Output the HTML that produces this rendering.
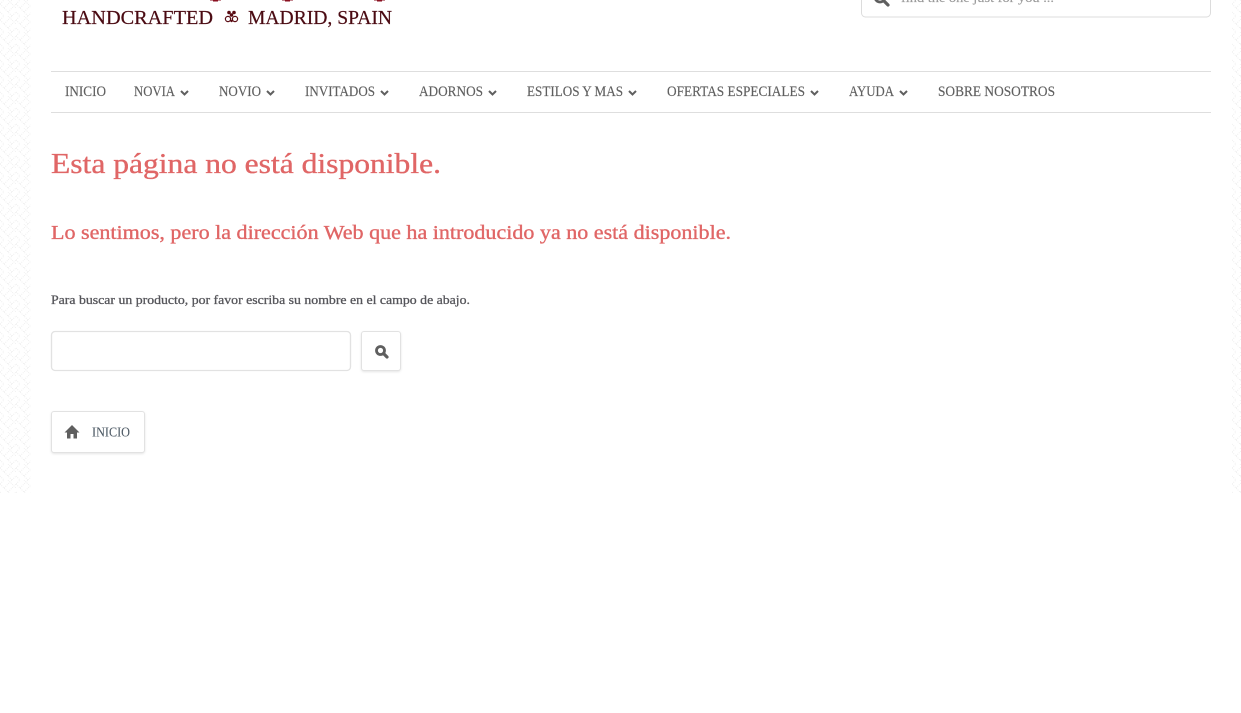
<!DOCTYPE html>
<html lang="es">
<head>
<meta charset="utf-8">
<title>Esta página no está disponible</title>
<style>
html,body{margin:0;padding:0;background:#fff;width:1241px;height:713px;overflow:hidden}
svg{position:absolute;left:0;top:0;display:block}
text{font-family:"Liberation Serif",serif}
.nav{font-size:14.5px;fill:#5f5f5f;stroke:#5f5f5f;stroke-width:.15px}
.h{fill:#e06666;stroke:#e06666;stroke-width:.35px}
</style>
</head>
<body>
<svg width="1241" height="713" viewBox="0 0 1241 713" xmlns="http://www.w3.org/2000/svg">
<defs>
<pattern id="weave" width="16" height="16" patternUnits="userSpaceOnUse">
<g stroke="#efefef" stroke-width="1" fill="none" stroke-dasharray="1 1">
<path d="M0 4L4 0M4 8L12 0M8 12L16 4M12 16L16 12M0 12L4 16M0 4L12 16M8 0L16 8"/>
</g>
</pattern>
</defs>
<rect x="0" y="0" width="31" height="493" fill="url(#weave)"/>
<rect x="1232" y="0" width="9" height="493" fill="url(#weave)"/>

<!-- logo remnants -->
<g fill="#8a1020">
<rect x="210" y="-2" width="11" height="2.5"/><rect x="213" y="0" width="5" height="1.5"/>
<rect x="282" y="-2" width="11" height="2.5"/><rect x="285" y="0" width="5" height="1.5"/>
<rect x="374" y="-2" width="11" height="2.5"/><rect x="377" y="0" width="5" height="1.5"/>
</g>
<text x="62" y="24" font-size="20" fill="#4a0a12" stroke="#4a0a12" stroke-width=".2" textLength="151" lengthAdjust="spacingAndGlyphs">HANDCRAFTED</text>
<g fill="#5a0c14">
<circle cx="229" cy="12.5" r="1.8"/><circle cx="234" cy="12.5" r="1.8"/><circle cx="231.5" cy="15" r="1.8"/>
<circle cx="228" cy="19" r="2.6" fill="none" stroke="#5a0c14" stroke-width="1.2"/><circle cx="235" cy="19" r="2.6" fill="none" stroke="#5a0c14" stroke-width="1.2"/>
<circle cx="231.5" cy="21" r="1.2"/>
</g>
<text x="248" y="24" font-size="20" fill="#4a0a12" stroke="#4a0a12" stroke-width=".2" textLength="144" lengthAdjust="spacingAndGlyphs">MADRID, SPAIN</text>

<!-- top search -->
<path d="M861.5 0V13a4 4 0 0 0 4 4H1206.5a4 4 0 0 0 4-4V0" fill="#fff" stroke="#dcdcdc"/>
<g>
<circle cx="880" cy="-3" r="5" fill="none" stroke="#5f5f5f" stroke-width="2.8"/>
<path d="M884 1L888 5" stroke="#5f5f5f" stroke-width="3.2" stroke-linecap="round"/>
</g>
<text x="901" y="2" font-size="13" fill="#9a9a9a" stroke="#9a9a9a" stroke-width=".15" textLength="153" lengthAdjust="spacingAndGlyphs">find the one just for you ...</text>

<!-- nav -->
<rect x="51" y="71" width="1160" height="1" fill="#dedede"/>
<rect x="51" y="112" width="1160" height="1" fill="#dedede"/>
<text class="nav" x="65" y="96" textLength="41" lengthAdjust="spacingAndGlyphs">INICIO</text>
<text class="nav" x="134" y="96" textLength="41" lengthAdjust="spacingAndGlyphs">NOVIA</text>
<text class="nav" x="219" y="96" textLength="42" lengthAdjust="spacingAndGlyphs">NOVIO</text>
<text class="nav" x="305" y="96" textLength="70" lengthAdjust="spacingAndGlyphs">INVITADOS</text>
<text class="nav" x="419" y="96" textLength="64" lengthAdjust="spacingAndGlyphs">ADORNOS</text>
<text class="nav" x="527" y="96" textLength="96" lengthAdjust="spacingAndGlyphs">ESTILOS Y MAS</text>
<text class="nav" x="667" y="96" textLength="138" lengthAdjust="spacingAndGlyphs">OFERTAS ESPECIALES</text>
<text class="nav" x="849" y="96" textLength="45" lengthAdjust="spacingAndGlyphs">AYUDA</text>
<text class="nav" x="938" y="96" textLength="117" lengthAdjust="spacingAndGlyphs">SOBRE NOSOTROS</text>
<g fill="none" stroke="#5f5f5f" stroke-width="2">
<path d="M181 91l3.5 3.5l3.5-3.5"/>
<path d="M267 91l3.5 3.5l3.5-3.5"/>
<path d="M381 91l3.5 3.5l3.5-3.5"/>
<path d="M489 91l3.5 3.5l3.5-3.5"/>
<path d="M629 91l3.5 3.5l3.5-3.5"/>
<path d="M811 91l3.5 3.5l3.5-3.5"/>
<path d="M900 91l3.5 3.5l3.5-3.5"/>
</g>

<!-- headings -->
<text class="h" x="51" y="173" font-size="29" textLength="390" lengthAdjust="spacingAndGlyphs">Esta página no está disponible.</text>
<text class="h" x="51" y="239" font-size="20" textLength="680" lengthAdjust="spacingAndGlyphs">Lo sentimos, pero la dirección Web que ha introducido ya no está disponible.</text>
<text x="51" y="304" font-size="13" fill="#55555a" stroke="#55555a" stroke-width=".3" textLength="419" lengthAdjust="spacingAndGlyphs">Para buscar un producto, por favor escriba su nombre en el campo de abajo.</text>

<!-- search form -->
<rect x="51.5" y="331.5" width="299" height="39" rx="3.5" fill="#fff" stroke="#e2e2e2" stroke-width="1.3"/>
<rect x="361.5" y="331.5" width="39" height="39" rx="2.5" fill="#fff" stroke="#e2e2e2" style="filter:drop-shadow(0 1px 1px rgba(0,0,0,.1))"/>
<circle cx="380.5" cy="350.5" r="4" fill="none" stroke="#5f5f5f" stroke-width="2.8"/>
<path d="M384 354L387 357" stroke="#5f5f5f" stroke-width="3.2" stroke-linecap="round"/>

<!-- home button -->
<rect x="51.5" y="411.5" width="93" height="41" rx="2.5" fill="#fff" stroke="#e2e2e2" style="filter:drop-shadow(0 1px 1px rgba(0,0,0,.1))"/>
<path d="M72 425L64.5 432.5H67V438.5H70.5V434H73.5V438.5H77V432.5H79.5Z" fill="#5f5f5f"/>
<text x="92" y="436.5" font-size="14" fill="#4f5b66" stroke="#4f5b66" stroke-width=".1" textLength="38" lengthAdjust="spacingAndGlyphs">INICIO</text>
</svg>
</body>
</html>
